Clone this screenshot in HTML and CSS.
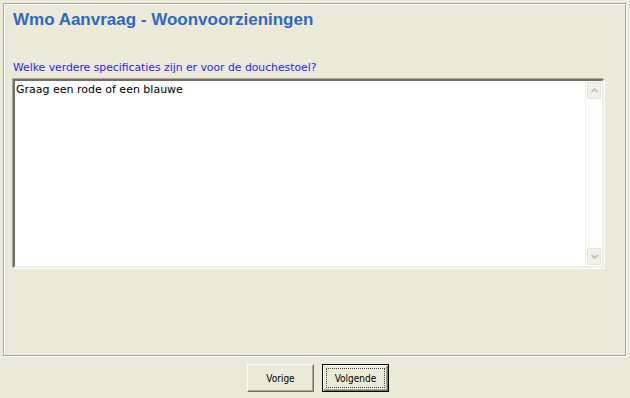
FILE: index.html
```html
<!DOCTYPE html>
<html>
<head>
<meta charset="utf-8">
<link rel="stylesheet" href="styles.css">
</head>
<body>
<div class="panel">
  <h1 class="title">Wmo Aanvraag - Woonvoorzieningen</h1>
  <p class="question">Welke verdere specificaties zijn er voor de douchestoel?</p>
  <div class="memo">
    <div class="memo-text">Graag een rode of een blauwe</div>
    <div class="scrollbar">
      <div class="sb-btn">
        <svg width="7" height="5" viewBox="0 0 7 5"><path d="M0.5 4 L3.5 1 L6.5 4" fill="none" stroke="#bdbab0" stroke-width="1.6"/></svg>
      </div>
      <div class="sb-track"></div>
      <div class="sb-btn">
        <svg width="7" height="5" viewBox="0 0 7 5"><path d="M0.5 1 L3.5 4 L6.5 1" fill="none" stroke="#bdbab0" stroke-width="1.6"/></svg>
      </div>
    </div>
  </div>
</div>
<div class="buttons">
  <button class="btn">Vorige</button>
  <button class="btn btn-default">Volgende</button>
</div>
</body>
</html>
```
FILE: styles.css
```css
html, body {
  margin: 0;
  padding: 0;
  background: #ece9d8;
  width: 630px;
  height: 398px;
  overflow: hidden;
}
body {
  font-family: "DejaVu Sans", "Liberation Sans", sans-serif;
}
.panel {
  margin: 3px 0 0 3px;
  width: 621px;
  height: 351px;
  border: 1px solid #aca899;
  box-shadow: inset 1px 1px 0 #fff, 1px 1px 0 #fff;
  box-sizing: content-box;
}
.title {
  margin: 5px 0 0 9px;
  font-family: "Liberation Sans", Arial, sans-serif;
  font-weight: bold;
  font-size: 17px;
  line-height: 21px;
  color: #2c69c3;
}
.question {
  margin: 31px 0 0 9px;
  font-family: "DejaVu Sans", sans-serif;
  font-size: 10.8px;
  line-height: 13px;
  color: #2525ff;
}
.memo {
  margin: 5px 0 0 9px;
  width: 587px;
  height: 185px;
  display: flex;
  background: #fff;
  border: 2px solid;
  border-color: #716f64 #f1efe2 #f1efe2 #716f64;
  box-shadow: -1px -1px 0 #aca899, 1px 1px 0 #fff;
}
.memo-text {
  flex: 1;
  padding: 2px 0 0 1px;
  font-family: "DejaVu Sans", sans-serif;
  font-size: 11px;
  line-height: 13px;
  color: #000;
}
.scrollbar {
  width: 16px;
  display: flex;
  flex-direction: column;
  background: #fdfdfb;
  border-left: 1px solid #f0efe9;
}
.sb-btn {
  height: 15px;
  margin: 1px;
  display: flex;
  align-items: center;
  justify-content: center;
  background: #f0efe8;
  border: 1px solid #e6e4dc;
  border-radius: 2px;
}
.sb-track {
  flex: 1;
}
.buttons {
  display: flex;
  justify-content: center;
  gap: 8px;
  padding: 8px 0 0 6px;
}
.btn {
  position: relative;
  width: 67px;
  height: 28px;
  margin: 0;
  padding: 0;
  background: #ece9d8;
  border: 1px solid;
  border-color: #fff #716f64 #716f64 #fff;
  box-shadow: inset -1px -1px 0 #aca899;
  font-family: "DejaVu Sans Condensed", "DejaVu Sans", sans-serif;
  font-size: 10px;
  color: #000;
}
.btn-default {
  border: 1px solid #000;
  box-shadow: inset 1px 1px 0 #fff, inset -1px -1px 0 #716f64, inset -2px -2px 0 #aca899;
}
.btn-default::after {
  content: "";
  position: absolute;
  inset: 3px;
  border: 1px dotted #444;
}
```
